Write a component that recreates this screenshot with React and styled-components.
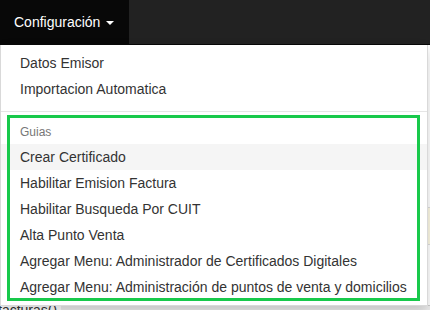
import React from "react";
import styled, { createGlobalStyle } from "styled-components";

const Global = createGlobalStyle`
  html, body { margin: 0; padding: 0; background: #fff; }
  body {
    font-family: "Liberation Sans", Arial, Helvetica, sans-serif;
    font-size: 14px;
    line-height: 1.42857143;
    color: #333;
    overflow: hidden;
  }
`;

const Page = styled.div`
  position: relative;
  width: 430px;
  height: 310px;
  overflow: hidden;
`;

const Navbar = styled.nav`
  display: flex;
  height: 44px;
  background: #222;
  border-bottom: 1px solid #080808;
`;

const NavToggle = styled.div`
  display: flex;
  align-items: center;
  padding: 0 15px 0 14px;
  width: 100px;
  background: #080808;
  color: #fff;
  font-size: 14px;
`;

const Caret = styled.span`
  display: inline-block;
  width: 0;
  height: 0;
  margin-left: 6px;
  margin-top: 1px;
  border-top: 4px solid #fff;
  border-left: 4px solid transparent;
  border-right: 4px solid transparent;
`;

const Content = styled.main`
  display: flex;
  flex-direction: column;
  padding-top: 162px;
`;

const WarnRow = styled.div`
  height: 36px;
  background: #fcf8e3;
  border-top: 1px solid #ddd;
  border-bottom: 1px solid #ddd;
`;

const CodeLine = styled.div`
  display: flex;
  align-items: flex-start;
  margin-top: 55px;
  height: 20px;
`;

const CodeText = styled.span`
  font-size: 14px;
  color: #333;
  margin-left: -2px;
  line-height: 20px;
`;

const CodeBar = styled.div`
  flex: 1;
  height: 20px;
  margin-top: 5px;
  margin-left: 4px;
  background: #eee;
  border-top: 1px solid #ccc;
`;

const Menu = styled.ul`
  position: absolute;
  top: 45px;
  left: 0;
  margin: 0;
  padding: 5px 0;
  list-style: none;
  background: #fff;
  border: 1px solid rgba(0, 0, 0, 0.15);
  border-top: 0;
  box-shadow: 0 6px 12px rgba(0, 0, 0, 0.175);
  white-space: nowrap;
  z-index: 10;
`;

const Item = styled.li`
  padding: 3px 20px 3px 19px;
  line-height: 1.42857143;
  color: #333;
  background: ${(p) => (p.$active ? "#f5f5f5" : "transparent")};
`;

const Header = styled.li`
  padding: 3px 20px 3px 19px;
  font-size: 12px;
  line-height: 1.42857143;
  color: #777;
`;

const Divider = styled.li`
  height: 1px;
  margin: 9px 0;
  background: #e5e5e5;
`;

const Highlight = styled.div`
  position: absolute;
  left: 6px;
  top: 70px;
  width: 413px;
  height: 186px;
  box-sizing: border-box;
  border: 3px solid #18c94b;
  pointer-events: none;
`;

const guias = [
  "Crear Certificado",
  "Habilitar Emision Factura",
  "Habilitar Busqueda Por CUIT",
  "Alta Punto Venta",
  "Agregar Menu: Administrador de Certificados Digitales",
  "Agregar Menu: Administración de puntos de venta y domicilios",
];

export default function App() {
  return (
    <Page>
      <Global />
      <Navbar>
        <NavToggle>
          Configuración
          <Caret />
        </NavToggle>
      </Navbar>
      <Content>
        <WarnRow />
        <CodeLine>
          <CodeText>facturas()</CodeText>
          <CodeBar />
        </CodeLine>
      </Content>
      <Menu>
        <Item>Datos Emisor</Item>
        <Item>Importacion Automatica</Item>
        <Divider />
        <Header>Guias</Header>
        {guias.map((g, i) => (
          <Item key={g} $active={i === 0}>
            {g}
          </Item>
        ))}
        <Highlight />
      </Menu>
    </Page>
  );
}
